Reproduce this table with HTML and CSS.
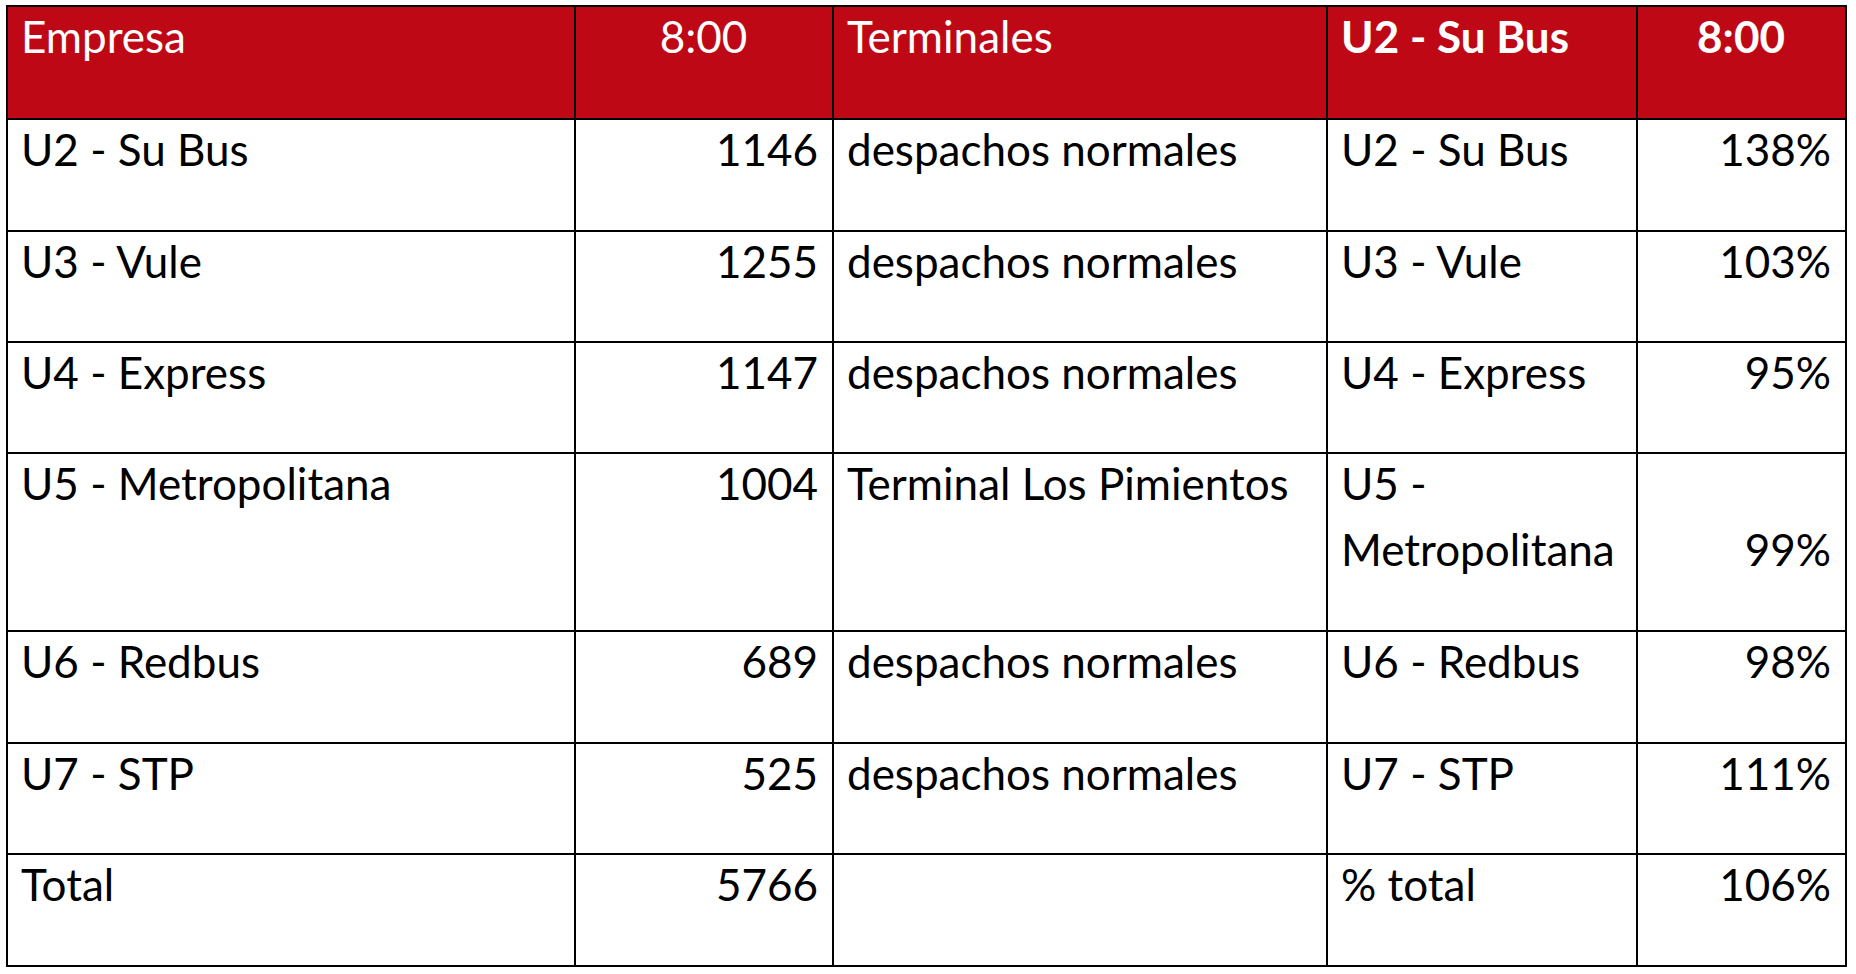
FILE: index.html
```html
<!DOCTYPE html>
<html lang="es">
<head>
<meta charset="utf-8">
<title>Despachos</title>
<link rel="stylesheet" href="styles.css">
</head>
<body>
<table class="grid">
  <colgroup>
    <col class="c1"><col class="c2"><col class="c3"><col class="c4"><col class="c5">
  </colgroup>
  <thead>
    <tr class="head">
      <th class="l">Empresa</th>
      <th class="c">8:00</th>
      <th class="l">Terminales</th>
      <th class="l b">U2 - Su Bus</th>
      <th class="c b">8:00</th>
    </tr>
  </thead>
  <tbody>
    <tr><td class="l">U2 - Su Bus</td><td class="r">1146</td><td class="l">despachos normales</td><td class="l">U2 - Su Bus</td><td class="r">138%</td></tr>
    <tr class="short"><td class="l">U3 - Vule</td><td class="r">1255</td><td class="l">despachos normales</td><td class="l">U3 - Vule</td><td class="r">103%</td></tr>
    <tr class="short"><td class="l">U4 - Express</td><td class="r">1147</td><td class="l">despachos normales</td><td class="l">U4 - Express</td><td class="r">95%</td></tr>
    <tr class="tall"><td class="l">U5 - Metropolitana</td><td class="r">1004</td><td class="l">Terminal Los Pimientos</td><td class="l"><span class="wrap">U5 -<br>Metropolitana</span></td><td class="r low">99%</td></tr>
    <tr><td class="l">U6 - Redbus</td><td class="r">689</td><td class="l">despachos normales</td><td class="l">U6 - Redbus</td><td class="r">98%</td></tr>
    <tr class="short"><td class="l">U7 - STP</td><td class="r">525</td><td class="l">despachos normales</td><td class="l">U7 - STP</td><td class="r">111%</td></tr>
    <tr><td class="l">Total</td><td class="r">5766</td><td class="l"></td><td class="l">% total</td><td class="r">106%</td></tr>
  </tbody>
</table>
</body>
</html>
```

FILE: styles.css
```css
html, body {
  margin: 0;
  padding: 0;
  background: #ffffff;
}

body {
  font-family: Lato, "Open Sans", "Liberation Sans", sans-serif;
  color: #000000;
}

.grid {
  border-collapse: collapse;
  table-layout: fixed;
  width: 1839px;
  margin: 5px 0 0 6px;
  border: 2px solid #000;
}

.c1 { width: 568px; }
.c2 { width: 258px; }
.c3 { width: 494px; }
.c4 { width: 310px; }
.c5 { width: 209px; }

.grid th,
.grid td {
  border: 2px solid #000;
  padding: 0 14px 0 13px;
  vertical-align: top;
  font-size: 44px;
  line-height: 58px;
  font-weight: 400;
  white-space: nowrap;
}

.head th {
  background: #bf0816;
  color: #ffffff;
  height: 111px;
}

.grid tbody tr { height: 112px; }
.grid tbody tr.short { height: 111px; }
.grid tbody tr.tall { height: 178px; }

.l { text-align: left; }
.r { text-align: right; }
.grid .c { text-align: center; }
.grid th.b { font-weight: 700; }

.wrap {
  display: block;
  line-height: 66px;
  margin-top: -4px;
}

.grid td.low { padding-top: 66px; }
```
